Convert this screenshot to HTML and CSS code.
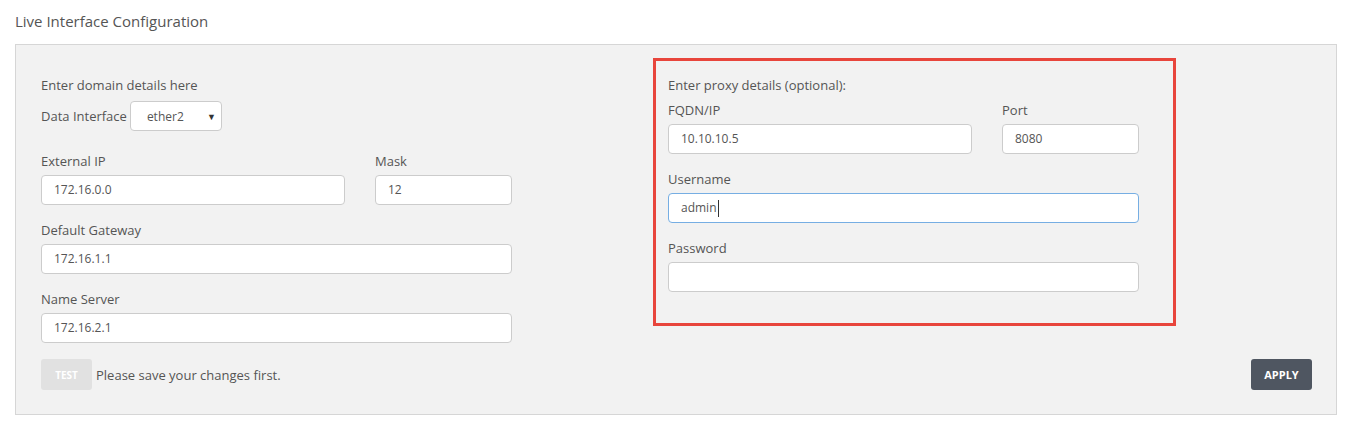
FILE: index.html
```html
<!DOCTYPE html>
<html>
<head>
<meta charset="utf-8">
<title>Live Interface Configuration</title>
<link rel="stylesheet" href="styles.css">
</head>
<body>
<div class="page">
  <h1 class="title">Live Interface Configuration</h1>
  <div class="panel">
    <div class="top-row">
      <div class="col-left">
        <div class="intro">Enter domain details here</div>
        <div class="iface-row">
          <span class="label-inline">Data Interface</span>
          <div class="select"><span class="select-text">ether2</span><span class="select-arrow">▼</span></div>
        </div>
        <div class="pair">
          <div class="field wide">
            <div class="label">External IP</div>
            <div class="input">172.16.0.0</div>
          </div>
          <div class="field narrow">
            <div class="label">Mask</div>
            <div class="input">12</div>
          </div>
        </div>
        <div class="field">
          <div class="label">Default Gateway</div>
          <div class="input">172.16.1.1</div>
        </div>
        <div class="field last">
          <div class="label">Name Server</div>
          <div class="input">172.16.2.1</div>
        </div>
      </div>
      <div class="proxy-box">
        <div class="col-right">
          <div class="intro intro-proxy">Enter proxy details (optional):</div>
          <div class="pair">
            <div class="field wide">
              <div class="label">FQDN/IP</div>
              <div class="input">10.10.10.5</div>
            </div>
            <div class="field narrow">
              <div class="label">Port</div>
              <div class="input">8080</div>
            </div>
          </div>
          <div class="field">
            <div class="label">Username</div>
            <div class="input focused">admin<span class="caret"></span></div>
          </div>
          <div class="field last">
            <div class="label">Password</div>
            <div class="input"></div>
          </div>
        </div>
      </div>
    </div>
    <div class="footer">
      <div class="test-group">
        <button class="btn btn-test">TEST</button>
        <span class="hint">Please save your changes first.</span>
      </div>
      <button class="btn btn-apply">APPLY</button>
    </div>
  </div>
</div>
</body>
</html>
```

FILE: styles.css
```css
* { box-sizing: border-box; }
html, body { margin: 0; padding: 0; background: #ffffff; }
body {
  font-family: "Open Sans", "Noto Sans", "Liberation Sans", sans-serif;
  color: #555555;
  font-size: 13px;
}
.page { padding: 0 16px 0 15px; }
.title {
  margin: 11px 0 13px 0;
  font-size: 15px;
  font-weight: 400;
  line-height: 20px;
  color: #555555;
}
.panel {
  background: #f2f2f2;
  border: 1px solid #d6d6d6;
  padding: 13px 24px 24px 25px;
}
.top-row { display: flex; align-items: flex-start; }
.col-left { width: 471px; padding-top: 17px; }
.proxy-box {
  margin-left: 141px;
  width: 523px;
  border: 3px solid #e8453c;
  padding: 14px 34px 31px 12px;
}
.col-right { width: 471px; }
.intro { line-height: 20px; height: 20px; }
.intro-proxy { margin-bottom: 5px; }
.iface-row {
  display: flex;
  align-items: center;
  margin-top: 6px;
  margin-bottom: 20px;
}
.label-inline { line-height: 20px; margin-right: 3px; }
.select {
  width: 92px;
  height: 30px;
  background: #ffffff;
  border: 1px solid #cccccc;
  border-radius: 4px;
  display: flex;
  align-items: center;
  padding: 0 0 0 16px;
  font-size: 12px;
  color: #555;
}
.select-text { flex: 1; }
.select-arrow { font-size: 9px; color: #333; margin-right: 5px; }
.pair { display: flex; gap: 30px; }
.field { margin-bottom: 15px; }
.field.last { margin-bottom: 0; }
.field.wide { width: 304px; }
.field.narrow { width: 137px; }
.label { line-height: 20px; height: 20px; margin-bottom: 4px; }
.input {
  height: 30px;
  background: #ffffff;
  border: 1px solid #cccccc;
  border-radius: 4px;
  padding: 0 12px;
  font-size: 12px;
  line-height: 28px;
  color: #555555;
  display: flex;
  align-items: center;
}
.input.focused { border-color: #76aee3; }
.caret {
  display: inline-block;
  width: 1px;
  height: 17px;
  background: #333333;
  margin-left: 1px;
}
.footer {
  display: flex;
  justify-content: space-between;
  align-items: center;
  margin-top: 16px;
}
.test-group { display: flex; align-items: center; }
.btn {
  font-family: "Open Sans", "Noto Sans", "Liberation Sans", sans-serif;
  font-weight: 700;
  font-size: 10px;
  border: none;
  border-radius: 3px;
  height: 31px;
  color: #ffffff;
  padding: 0;
}
.btn-test { width: 51px; background: #e1e1e1; }
.btn-apply { width: 61px; background: #4f5661; font-size: 11px; }
.hint { margin-left: 4px; line-height: 20px; }
```
